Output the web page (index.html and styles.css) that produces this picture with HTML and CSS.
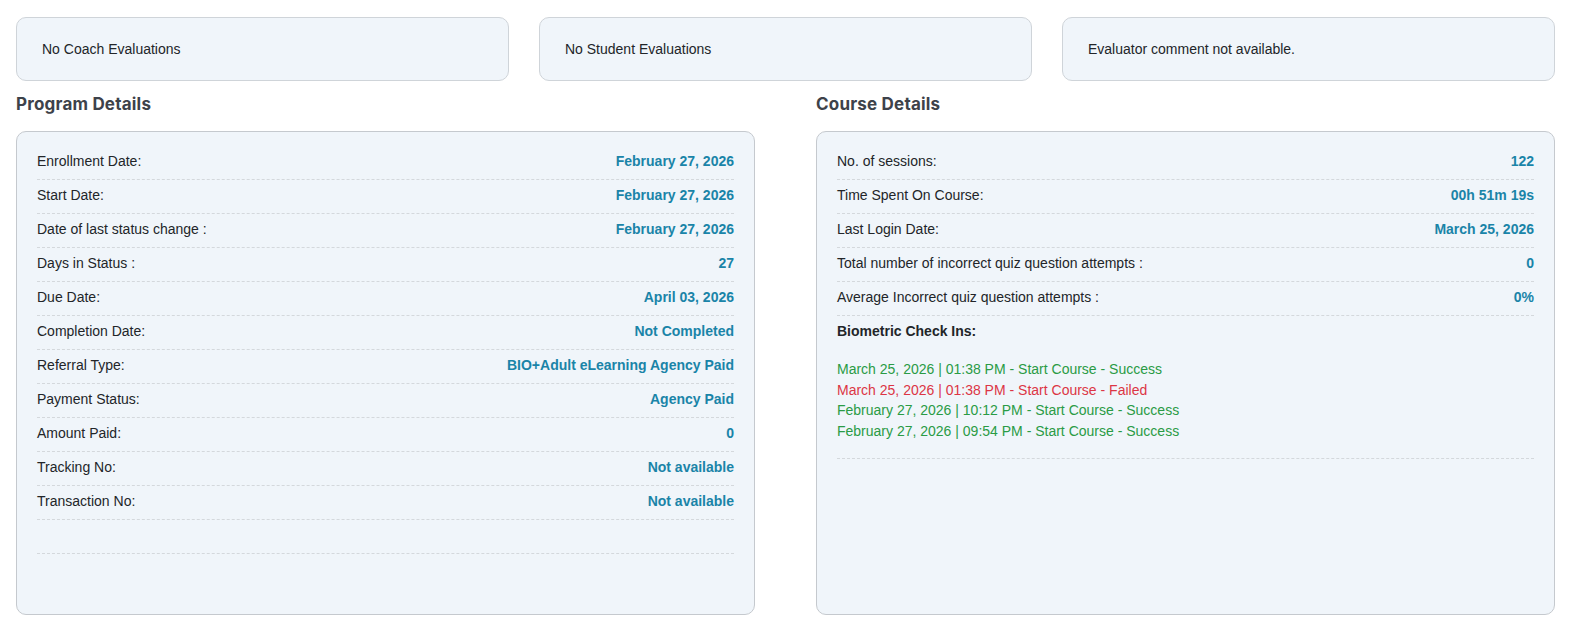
FILE: index.html
```html
<!DOCTYPE html>
<html>
<head>
<meta charset="utf-8">
<link rel="stylesheet" href="styles.css">
</head>
<body>
<div class="page">
  <div class="evals">
    <div class="eval-card">No Coach Evaluations</div>
    <div class="eval-card">No Student Evaluations</div>
    <div class="eval-card">Evaluator comment not available.</div>
  </div>
  <div class="details">
    <section class="col">
      <h2 class="title">Program Details</h2>
      <div class="card card-program">
        <div class="row"><span class="label">Enrollment Date:</span><span class="value">February 27, 2026</span></div>
        <div class="row"><span class="label">Start Date:</span><span class="value">February 27, 2026</span></div>
        <div class="row"><span class="label">Date of last status change :</span><span class="value">February 27, 2026</span></div>
        <div class="row"><span class="label">Days in Status :</span><span class="value">27</span></div>
        <div class="row"><span class="label">Due Date:</span><span class="value">April 03, 2026</span></div>
        <div class="row"><span class="label">Completion Date:</span><span class="value">Not Completed</span></div>
        <div class="row"><span class="label">Referral Type:</span><span class="value">BIO+Adult eLearning Agency Paid</span></div>
        <div class="row"><span class="label">Payment Status:</span><span class="value">Agency Paid</span></div>
        <div class="row"><span class="label">Amount Paid:</span><span class="value">0</span></div>
        <div class="row"><span class="label">Tracking No:</span><span class="value">Not available</span></div>
        <div class="row"><span class="label">Transaction No:</span><span class="value">Not available</span></div>
        <div class="row"><span class="label">&nbsp;</span></div>
      </div>
    </section>
    <section class="col">
      <h2 class="title">Course Details</h2>
      <div class="card">
        <div class="row"><span class="label">No. of sessions:</span><span class="value">122</span></div>
        <div class="row"><span class="label">Time Spent On Course:</span><span class="value">00h 51m 19s</span></div>
        <div class="row"><span class="label">Last Login Date:</span><span class="value">March 25, 2026</span></div>
        <div class="row"><span class="label">Total number of incorrect quiz question attempts :</span><span class="value">0</span></div>
        <div class="row"><span class="label">Average Incorrect quiz question attempts :</span><span class="value">0%</span></div>
        <div class="bio">
          <div class="bio-title">Biometric Check Ins:</div>
          <ul class="bio-list">
            <li class="ok">March 25, 2026 | 01:38 PM - Start Course - Success</li>
            <li class="fail">March 25, 2026 | 01:38 PM - Start Course - Failed</li>
            <li class="ok">February 27, 2026 | 10:12 PM - Start Course - Success</li>
            <li class="ok">February 27, 2026 | 09:54 PM - Start Course - Success</li>
          </ul>
        </div>
      </div>
    </section>
  </div>
</div>
</body>
</html>
```

FILE: styles.css
```css
* { box-sizing: border-box; }
html, body { margin: 0; padding: 0; background: #ffffff; }
body {
  font-family: "Liberation Sans", Arial, sans-serif;
  font-size: 14px;
  color: #222529;
}
.page {
  width: 1555px;
  padding: 17px 0 0 16px;
}
.evals {
  display: grid;
  grid-template-columns: repeat(3, 1fr);
  column-gap: 30px;
}
.eval-card {
  height: 64px;
  display: flex;
  align-items: center;
  padding: 0 25px 1px;
  background: #f0f5fa;
  border: 1px solid #cfd4d9;
  border-radius: 10px;
  color: #222529;
}
.details {
  display: grid;
  grid-template-columns: 739px 739px;
  column-gap: 61px;
}
.col { display: flex; flex-direction: column; }
.title {
  font-family: "Inter", "Poppins", sans-serif;
  font-weight: 700;
  font-size: 17px;
  letter-spacing: 0.2px;
  line-height: 24px;
  color: #3d424a;
  margin: 11px 0 15px;
}
.card {
  flex: 1;
  background: #f0f5fa;
  border: 1px solid #c5c9ce;
  border-radius: 10px;
  padding: 14px 20px 60px;
}
.row {
  display: flex;
  justify-content: space-between;
  padding: 7px 0 9px;
  line-height: 17px;
  border-bottom: 1px dashed #d4d8dc;
}
.value {
  font-weight: 700;
  color: #1a84a8;
}
.bio {
  padding: 7px 0 16px;
  border-bottom: 1px dashed #d4d8dc;
}
.bio-title {
  font-weight: 700;
  line-height: 17px;
  color: #222529;
}
.bio-list {
  list-style: none;
  margin: 19px 0 0;
  padding: 0;
  line-height: 20.7px;
}
.ok { color: #2a9b45; }
.fail { color: #dc3545; }
```
